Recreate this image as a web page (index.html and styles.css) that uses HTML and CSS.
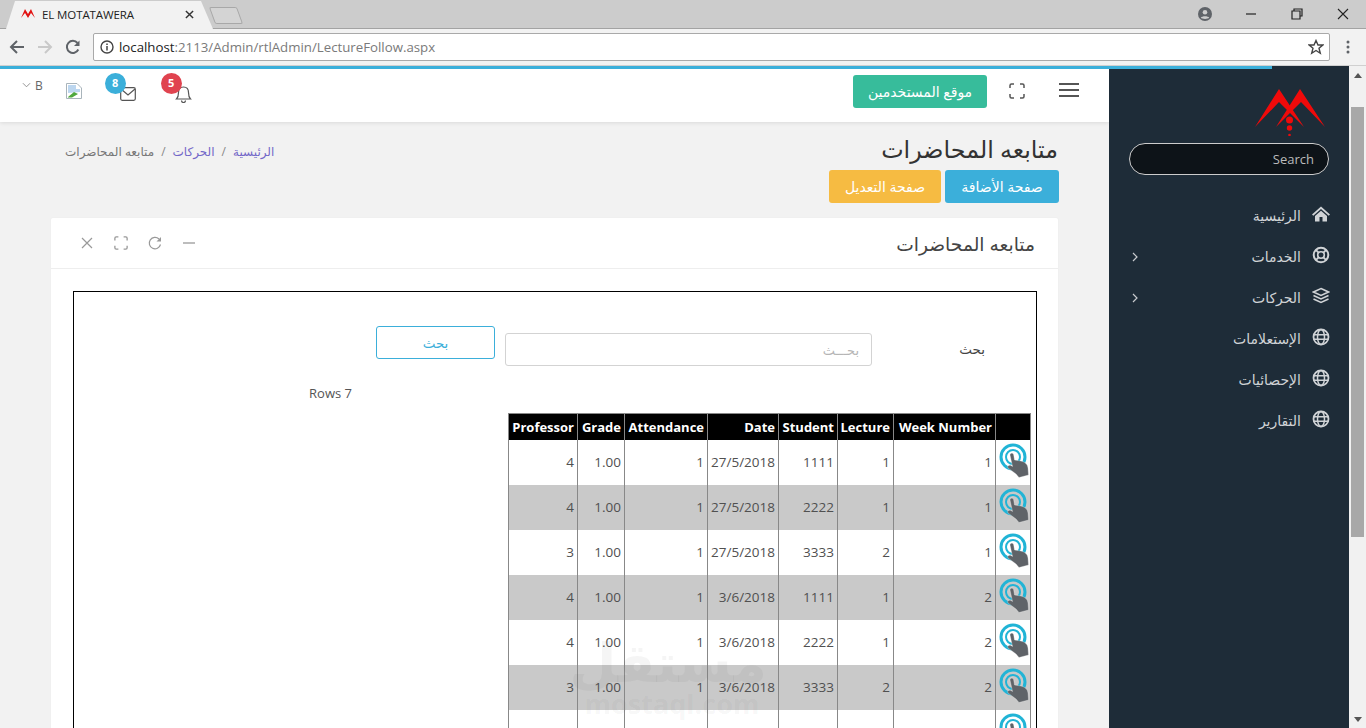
FILE: index.html
```html
<!DOCTYPE html>
<html lang="ar">
<head>
<meta charset="utf-8">
<title>EL MOTATAWERA</title>
<link rel="stylesheet" href="styles.css">
</head>
<body>
<svg class="defs" width="0" height="0" aria-hidden="true">
  <symbol id="hand" viewBox="0 0 30 35">
    <circle cx="14" cy="14" r="12" fill="none" stroke="#21b4d6" stroke-width="3"/>
    <circle cx="14" cy="14" r="7" fill="none" stroke="#21b4d6" stroke-width="2"/>
    <path d="M11 12 C11 9.500 14.500 9.500 14.700 12 L15.500 17 L22 18 C26 19 28.500 21 29 25 L29.500 32 L20 34.500 L17 31 L9 25 C8 23 10 21.500 12 22.500 L13.500 23.500 Z" fill="#5f6368" stroke="#fff" stroke-opacity=".5" stroke-width=".6"/>
  </symbol>
  <symbol id="globe" viewBox="0 0 18 18">
    <circle cx="9" cy="9" r="7.500" fill="none" stroke="#d0d3d6" stroke-width="1.800"/>
    <ellipse cx="9" cy="9" rx="3.500" ry="7.500" fill="none" stroke="#d0d3d6" stroke-width="1.500"/>
    <path d="M1.500 6.700H16.500M1.500 11.300H16.500" stroke="#d0d3d6" stroke-width="1.500"/>
  </symbol>
  <symbol id="expand" viewBox="0 0 16 16">
    <path d="M1 5V2.500A1.500 1.500 0 0 1 2.500 1H5M11 1H13.500A1.500 1.500 0 0 1 15 2.500V5M15 11V13.500A1.500 1.500 0 0 1 13.500 15H11M5 15H2.500A1.500 1.500 0 0 1 1 13.500V11" fill="none" stroke="currentColor" stroke-width="1.500"/>
  </symbol>
  <symbol id="chev" viewBox="0 0 8 10">
    <path d="M2 1L6 5L2 9" fill="none" stroke="#c8cbce" stroke-width="1.200"/>
  </symbol>
</svg>

<header class="chrome">
  <div class="tabstrip">
    <div class="tab">
      <svg class="favicon" viewBox="0 0 14 12"><path d="M0 10L4 1L7 6L10 1L14 10L10 5L7 10L4 5Z" fill="#e21414"/></svg>
      <span class="tab-title">EL MOTATAWERA</span>
      <svg class="tab-close" viewBox="0 0 10 10"><path d="M1 1L9 9M9 1L1 9" stroke="#333" stroke-width="1.600"/></svg>
    </div>
    <div class="newtab"></div>
    <div class="winctl">
      <svg class="win-icon profile" viewBox="0 0 14 14"><circle cx="7" cy="7" r="7" fill="#5f6368"/><circle cx="7" cy="5.300" r="2.300" fill="#ccc"/><path d="M2.800 10.800C4 8.800 10 8.800 11.200 10.800C10 12.300 4 12.300 2.800 10.800Z" fill="#ccc"/></svg>
      <svg class="win-icon min" viewBox="0 0 12 12"><path d="M1 6H11" stroke="#222" stroke-width="1.200"/></svg>
      <svg class="win-icon max" viewBox="0 0 12 12"><path d="M3 3V1H11V8H9M1 3H9V11H1Z" fill="none" stroke="#222" stroke-width="1.200"/></svg>
      <svg class="win-icon cls" viewBox="0 0 12 12"><path d="M1 1L11 11M11 1L1 11" stroke="#222" stroke-width="1.100"/></svg>
    </div>
  </div>
  <div class="toolbar">
    <svg class="nav-icon" viewBox="0 0 16 16"><path d="M15 8H2M8 2L2 8L8 14" fill="none" stroke="#5f6368" stroke-width="2"/></svg>
    <svg class="nav-icon" viewBox="0 0 16 16"><path d="M1 8H14M8 2L14 8L8 14" fill="none" stroke="#c9c9c9" stroke-width="2"/></svg>
    <svg class="nav-icon" viewBox="0 0 16 16"><path d="M13.300 10.500A6 6 0 1 1 12.500 4" fill="none" stroke="#5f6368" stroke-width="2"/><path d="M14.500 1.500V7H9Z" fill="#5f6368"/></svg>
    <div class="omnibox">
      <svg class="info" viewBox="0 0 14 14"><circle cx="7" cy="7" r="6" fill="none" stroke="#444" stroke-width="1.400"/><path d="M7 6V10.500M7 3.500V5" stroke="#444" stroke-width="1.500"/></svg>
      <span class="url"><span class="url-host">localhost</span>:2113/Admin/rtlAdmin/LectureFollow.aspx</span>
      <svg class="star" viewBox="0 0 16 16"><path d="M8 1.500L10 6H14.800L11 9.200L12.300 14.300L8 11.500L3.700 14.300L5 9.200L1.200 6H6Z" fill="none" stroke="#444" stroke-width="1.400"/></svg>
    </div>
    <svg class="menu-dots" viewBox="0 0 4 14"><circle cx="2" cy="2" r="1.500" fill="#5f6368"/><circle cx="2" cy="7" r="1.500" fill="#5f6368"/><circle cx="2" cy="12" r="1.500" fill="#5f6368"/></svg>
  </div>
</header>

<div class="page">
  <div class="loader"></div>

  <main class="main">
    <div class="topbar">
      <div class="top-left">
        <svg class="chev-down" viewBox="0 0 10 6"><path d="M1 1L5 5L9 1" fill="none" stroke="#888" stroke-width="1"/></svg>
        <span class="user">B</span>
        <svg class="broken" viewBox="0 0 16 16"><path d="M.500 .500H11L15.500 5V15.500H.500Z" fill="#fff" stroke="#a9b4bb"/><path d="M2 2H10V6H14V9L2 10Z" fill="#bcd6ef"/><path d="M2 14L8 9L12 11L6 14.500H2Z" fill="#4fa83d"/></svg>
        <span class="alert mail">
          <svg class="alert-icon" viewBox="0 0 16 14"><rect x=".700" y=".700" width="14.600" height="12.600" rx="1.500" fill="none" stroke="#555" stroke-width="1.200"/><path d="M1 2L8 8L15 2" fill="none" stroke="#555" stroke-width="1.200"/></svg>
          <span class="badge badge-blue">8</span>
        </span>
        <span class="alert bell">
          <svg class="alert-icon" viewBox="0 0 16 18"><path d="M1 14C3 12 3 10 3 7.500C3 4 5 2 8 2C11 2 13 4 13 7.500C13 10 13 12 15 14Z" fill="none" stroke="#555" stroke-width="1.200"/><path d="M6 15.500A2 2 0 0 0 10 15.500" fill="none" stroke="#555" stroke-width="1.200"/></svg>
          <span class="badge badge-red">5</span>
        </span>
      </div>
      <div class="top-right">
        <svg class="hamburger" viewBox="0 0 20 14"><path d="M0 1H20M0 7H20M0 13H20" stroke="#555" stroke-width="2"/></svg>
        <svg class="top-expand"><use href="#expand"/></svg>
        <a class="btn btn-green">موقع المستخدمين</a>
      </div>
    </div>

    <div class="head">
      <div class="head-title">
        <h1>متابعه المحاضرات</h1>
        <div class="head-btns">
          <a class="btn btn-blue">صفحة الأضافة</a>
          <a class="btn btn-yellow">صفحة التعديل</a>
        </div>
      </div>
      <nav class="crumbs">
        <a>الرئيسية</a><span class="sep">/</span><a>الحركات</a><span class="sep">/</span><span>متابعه المحاضرات</span>
      </nav>
    </div>

    <section class="card">
      <div class="card-head">
        <h2>متابعه المحاضرات</h2>
        <div class="card-tools">
          <svg class="tool" viewBox="0 0 14 14"><path d="M1 7H13" stroke="#999" stroke-width="1.300"/></svg>
          <svg class="tool" viewBox="0 0 14 14"><path d="M12.500 8.500A5.700 5.700 0 1 1 11 3" fill="none" stroke="#999" stroke-width="1.200"/><path d="M13 1V5.500H8.500Z" fill="#999"/></svg>
          <svg class="tool tool-exp"><use href="#expand"/></svg>
          <svg class="tool" viewBox="0 0 14 14"><path d="M2 2L12 12M12 2L2 12" stroke="#999" stroke-width="1.200"/></svg>
        </div>
      </div>
      <div class="card-body">
        <div class="box">
          <div class="search-row">
            <label class="search-label">بحث</label>
            <input class="search-input" type="text" placeholder="بحـــث">
            <button class="search-btn" type="button">بحث</button>
          </div>
          <div class="rows-count" dir="ltr">Rows 7</div>
          <table class="grid">
            <colgroup>
              <col class="c-icon"><col class="c-week"><col class="c-lec"><col class="c-stu"><col class="c-date"><col class="c-att"><col class="c-grade"><col class="c-prof">
            </colgroup>
            <thead>
              <tr><th></th><th>Week Number</th><th>Lecture</th><th>Student</th><th>Date</th><th>Attendance</th><th>Grade</th><th>Professor</th></tr>
            </thead>
            <tbody>
              <tr><td class="ic"><svg class="hand"><use href="#hand"/></svg></td><td>1</td><td>1</td><td>1111</td><td>27/5/2018</td><td>1</td><td>1.00</td><td>4</td></tr>
              <tr><td class="ic"><svg class="hand"><use href="#hand"/></svg></td><td>1</td><td>1</td><td>2222</td><td>27/5/2018</td><td>1</td><td>1.00</td><td>4</td></tr>
              <tr><td class="ic"><svg class="hand"><use href="#hand"/></svg></td><td>1</td><td>2</td><td>3333</td><td>27/5/2018</td><td>1</td><td>1.00</td><td>3</td></tr>
              <tr><td class="ic"><svg class="hand"><use href="#hand"/></svg></td><td>2</td><td>1</td><td>1111</td><td>3/6/2018</td><td>1</td><td>1.00</td><td>4</td></tr>
              <tr><td class="ic"><svg class="hand"><use href="#hand"/></svg></td><td>2</td><td>1</td><td>2222</td><td>3/6/2018</td><td>1</td><td>1.00</td><td>4</td></tr>
              <tr><td class="ic"><svg class="hand"><use href="#hand"/></svg></td><td>2</td><td>2</td><td>3333</td><td>3/6/2018</td><td>1</td><td>1.00</td><td>3</td></tr>
              <tr><td class="ic"><svg class="hand"><use href="#hand"/></svg></td><td>3</td><td>1</td><td>1111</td><td>10/6/2018</td><td>1</td><td>1.00</td><td>4</td></tr>
            </tbody>
          </table>
        </div>
      </div>
    </section>
    <div class="watermark">
      <div class="wm-ar">مستقل</div>
      <div class="wm-en">mostaql.com</div>
    </div>
  </main>

  <aside class="sidebar">
    <div class="logo-wrap">
      <svg class="logo" viewBox="0 0 70 48">
        <path d="M0 39L24 1L49 39L30 20L24 14Z" fill="#f00a0a"/>
        <path d="M70 39L45 1L21 39L40 20L46 14Z" fill="#f00a0a"/>
        <circle cx="34.500" cy="32" r="3.500" fill="#f00a0a"/><circle cx="34.500" cy="40" r="2.700" fill="#f00a0a"/><circle cx="34.500" cy="47" r="1.300" fill="#f00a0a"/>
      </svg>
    </div>
    <div class="side-search">Search</div>
    <ul class="menu">
      <li class="menu-item">
        <svg class="menu-icon" viewBox="0 0 18 18"><path d="M9 1.500L0 9.500L1.300 10.800L9 4L16.700 10.800L18 9.500ZM3 11V16.500H7.500V12H10.500V16.500H15V11L9 5.700Z" fill="#d0d3d6"/></svg>
        <span>الرئيسية</span>
      </li>
      <li class="menu-item">
        <svg class="menu-icon" viewBox="0 0 18 18"><circle cx="9" cy="9" r="7.300" fill="none" stroke="#d0d3d6" stroke-width="2"/><circle cx="9" cy="9" r="3.300" fill="none" stroke="#d0d3d6" stroke-width="1.600"/><path d="M3.800 3.800L6.600 6.600M14.200 3.800L11.400 6.600M3.800 14.200L6.600 11.400M14.200 14.200L11.400 11.400" stroke="#d0d3d6" stroke-width="1.800"/></svg>
        <span>الخدمات</span>
        <svg class="menu-chev"><use href="#chev"/></svg>
      </li>
      <li class="menu-item">
        <svg class="menu-icon" viewBox="0 0 18 18"><path d="M9 1.500L16.500 5L9 8.500L1.500 5Z" fill="none" stroke="#d0d3d6" stroke-width="1.500"/><path d="M1.500 8.500L9 12L16.500 8.500M1.500 12L9 15.500L16.500 12" fill="none" stroke="#d0d3d6" stroke-width="1.500"/></svg>
        <span>الحركات</span>
        <svg class="menu-chev"><use href="#chev"/></svg>
      </li>
      <li class="menu-item"><svg class="menu-icon"><use href="#globe"/></svg><span>الإستعلامات</span></li>
      <li class="menu-item"><svg class="menu-icon"><use href="#globe"/></svg><span>الإحصائيات</span></li>
      <li class="menu-item"><svg class="menu-icon"><use href="#globe"/></svg><span>التقارير</span></li>
    </ul>
  </aside>

  <div class="scrollbar">
    <span class="arrow-up"></span>
    <span class="thumb"></span>
    <span class="arrow-down"></span>
  </div>
</div>
</body>
</html>
```
FILE: styles.css
```css
* { box-sizing: border-box; }
html, body { margin: 0; padding: 0; height: 100%; overflow: hidden; }
body { font-family: "Open Sans", "DejaVu Sans", sans-serif; background: #f2f2f2; color: #444; display: flex; flex-direction: column; }
.defs { position: absolute; }
a { text-decoration: none; }

/* browser chrome */
.chrome { flex: none; height: 66px; }
.tabstrip { height: 29px; background: #ccc; border-bottom: 1px solid #a3a3a3; display: flex; align-items: flex-start; position: relative; }
.tab { margin: 1px 0 0 6px; width: 207px; height: 28px; background: #f2f2f2; clip-path: polygon(0 100%, 9px 0, 195px 0, 207px 100%); display: flex; align-items: center; padding: 0 19px 2px 15px; position: relative; z-index: 1; }
.favicon { width: 14px; height: 12px; flex: none; }
.tab-title { font-size: 11.5px; color: #222; margin-left: 7px; flex: 1; white-space: nowrap; letter-spacing: -.1px; }
.tab-close { width: 9px; height: 9px; flex: none; }
.newtab { width: 28px; height: 17px; margin: 7px 0 0 -1px; background: #d4d4d4; border: 1px solid #a8a8a8; border-radius: 2px; transform: skewX(20deg); }
.winctl { margin-left: auto; display: flex; align-items: center; height: 27px; }
.win-icon { display: block; }
.profile { width: 14px; height: 14px; margin-right: 33px; }
.min { width: 12px; height: 12px; margin-right: 34px; }
.max { width: 12px; height: 12px; margin-right: 34px; }
.cls { width: 12px; height: 12px; margin-right: 17px; }
.toolbar { height: 37px; background: #f2f2f2; border-bottom: 1px solid #d0d0d0; display: flex; align-items: center; padding: 0 0 1px 9px; }
.nav-icon { width: 16px; height: 16px; margin-right: 12px; flex: none; }
.omnibox { width: 1237px; height: 28px; background: #fff; border: 1px solid #a9a9a9; border-radius: 2px; display: flex; align-items: center; padding: 0 5px 0 6px; flex: none; }
.info { width: 14px; height: 14px; flex: none; margin-right: 5px; }
.url { font-size: 13.25px; color: #7a7a7a; flex: 1; white-space: nowrap; }
.url-host { color: #222; }
.star { width: 16px; height: 16px; flex: none; }
.menu-dots { width: 4px; height: 14px; margin-left: 16px; flex: none; }

/* page */
.page { flex: 1; min-height: 0; display: flex; position: relative; overflow: hidden; }
.loader { position: absolute; top: 0; left: 0; width: 1272px; height: 3px; background: #3bafda; z-index: 5; }
.main { width: 1109px; flex: none; position: relative; overflow: hidden; }
.sidebar { width: 240px; flex: none; background: #1e2c38; }
.scrollbar { width: 17px; flex: none; background: #f1f1f1; display: flex; flex-direction: column; align-items: center; position: relative; }
.arrow-up { margin-top: 7px; width: 0; height: 0; border: 4px solid transparent; border-top: 0; border-bottom: 5px solid #555; }
.thumb { margin-top: 29px; width: 13px; height: 430px; background: #a8a8a8; }
.arrow-down { margin-top: auto; margin-bottom: 6px; width: 0; height: 0; border: 4px solid transparent; border-bottom: 0; border-top: 5px solid #555; }

/* top bar */
.topbar { height: 56px; background: #fff; box-shadow: 0 1px 4px rgba(0,0,0,.1); display: flex; justify-content: space-between; padding-top: 3px; position: relative; }
.top-left { display: flex; align-items: flex-start; padding-left: 22px; }
.chev-down { width: 9px; height: 6px; margin-top: 13px; }
.user { font-size: 12px; color: #666; margin-left: 4px; margin-top: 8px; line-height: 17px; }
.broken { width: 16px; height: 16px; margin: 14px 0 0 23px; }
.alert { position: relative; display: block; }
.alert-icon { display: block; }
.mail { margin: 18px 0 0 38px; width: 16px; height: 14px; }
.mail .alert-icon { width: 16px; height: 14px; }
.bell { margin: 16px 0 0 39px; width: 17px; height: 18px; }
.bell .alert-icon { width: 17px; height: 18px; }
.badge { position: absolute; width: 21px; height: 21px; border-radius: 50%; color: #fff; font-size: 11px; font-weight: 700; line-height: 20px; text-align: center; }
.mail .badge { left: -15px; top: -14px; }
.bell .badge { left: -14px; top: -12px; }
.badge-blue { background: #3bafda; }
.badge-red { background: #e0434f; }
.top-right { display: flex; direction: rtl; align-items: flex-start; padding-right: 30px; }
.hamburger { width: 20px; height: 14px; margin-top: 14px; }
.top-expand { width: 16px; height: 16px; margin: 14px 34px 0 0; color: #555; }
.btn { display: block; height: 33px; line-height: 33px; border-radius: 3px; color: #fff; font-size: 14px; text-align: center; white-space: nowrap; }
.btn-green { width: 134px; margin: 6px 22px 0 0; background: #37bc9b; }
.btn-blue { width: 114px; background: #3bafda; }
.btn-yellow { width: 112px; background: #f6bb42; }

/* heading */
.head { direction: rtl; display: flex; justify-content: space-between; align-items: flex-start; padding: 9px 50px 0 0; height: 96px; }
.head h1 { margin: 0; font-size: 23.8px; font-weight: 400; color: #333; line-height: 36px; padding-right: 1px; }
.head-btns { display: flex; gap: 4px; margin-top: 3px; }
.crumbs { display: flex; align-items: center; font-size: 12px; color: #777; padding-left: 65px; margin-top: 12px; white-space: nowrap; }
.crumbs a { color: #7367c8; }
.sep { margin: 0 7px; color: #888; }

/* card */
.card { margin: 0 51px; background: #fff; direction: rtl; box-shadow: 0 0 2px rgba(0,0,0,.04); border-radius: 2px; }
.card-head { height: 51px; display: flex; justify-content: space-between; align-items: center; padding: 0 23px 0 29px; border-bottom: 1px solid #eee; }
.card-head h2 { margin: 0; font-size: 18.7px; font-weight: 400; color: #444; }
.card-tools { display: flex; gap: 20px; align-items: center; }
.tool { width: 14px; height: 14px; display: block; color: #999; }
.card-body { padding: 22px 21px 0 22px; }
.box { border: 1px solid #000; background: #fff; height: 800px; padding-top: 34px; }
.search-row { display: flex; align-items: flex-start; padding-right: 51px; }
.search-label { width: 113px; font-size: 13.5px; color: #444; line-height: 33px; margin-top: 7px; flex: none; }
.search-input { width: 367px; height: 33px; margin-top: 7px; margin-left: 10px; border: 1px solid #d3d3d3; border-radius: 3px; padding: 0 12px; font-family: inherit; font-size: 13px; background: #fff; color: #444; }
.search-input::placeholder { color: #b5b5b5; }
.search-btn { width: 119px; height: 33px; background: #fff; border: 1px solid #3bafda; border-radius: 3px; color: #3bafda; font-family: inherit; font-size: 13.5px; padding: 0; }
.rows-count { margin: 17px 684px 0 0; text-align: right; font-size: 13px; line-height: 20px; color: #555; }
.grid { margin: 10px 5px 0 0; width: 522px; table-layout: fixed; border-collapse: collapse; border-top: 1px solid #888; font-size: 13.5px; color: #505050; }
.c-icon { width: 35px; } .c-week { width: 102px; } .c-lec { width: 56px; } .c-stu { width: 59px; }
.c-date { width: 71px; } .c-att { width: 83px; } .c-grade { width: 47px; } .c-prof { width: 69px; }
.grid th { height: 26px; background: #000; color: #fff; font-size: 13px; font-weight: 700; text-align: right; padding: 0 3px; border-left: 1px solid #888; border-right: 1px solid #888; white-space: nowrap; overflow: visible; }
.grid td { height: 45px; text-align: right; padding: 0 3px; border-left: 1px solid #888; border-right: 1px solid #888; background: #fff; }
.grid tbody tr:nth-child(even) td { background: #c9c9c9; }
.grid td.ic { padding: 0; vertical-align: top; }
.hand { display: block; width: 30px; height: 35px; margin: 3px 1px 0 0; }

/* watermark */
.watermark { position: absolute; left: 577px; top: 567px; width: 190px; text-align: center; direction: rtl; color: rgba(60,60,60,.05); pointer-events: none; }
.wm-ar { font-size: 54px; font-weight: 700; line-height: 56px; }
.wm-en { font-size: 27px; font-weight: 700; line-height: 30px; direction: ltr; }

/* sidebar */
.logo-wrap { height: 74px; display: flex; justify-content: flex-end; padding: 22px 24px 0 0; }
.logo { width: 70px; height: 48px; display: block; }
.side-search { margin: 3px 20px 0; height: 32px; border: 1px solid #ccc; border-radius: 16px; background: #0d1318; color: #bbb; font-size: 13px; line-height: 30px; text-align: right; padding-right: 14px; }
.menu { list-style: none; margin: 20px 0 0; padding: 0; direction: rtl; }
.menu-item { height: 41px; display: flex; align-items: center; padding-right: 19px; color: #d0d3d6; font-size: 14px; position: relative; }
.menu-icon { width: 18px; height: 18px; margin: 0 0 4px 11px; flex: none; }
.menu-chev { width: 8px; height: 10px; margin-right: auto; margin-left: 22px; transform: none; }
```
